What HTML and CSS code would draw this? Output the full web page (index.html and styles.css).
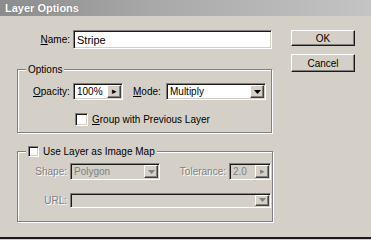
FILE: index.html
```html
<!DOCTYPE html>
<html>
<head>
<meta charset="utf-8">
<link rel="stylesheet" href="styles.css">
</head>
<body>
<div class="dialog">
  <div class="titlebar">Layer Options</div>
  <div class="main">
    <div class="left">
      <div class="name-row">
        <label class="name-label"><u>N</u>ame:</label>
        <div class="field name-field">Stripe</div>
      </div>
      <div class="group options">
        <span class="legend">Options</span>
        <div class="opt-row">
          <label class="lbl"><u>O</u>pacity:</label>
          <div class="field opacity"><span class="val">100%</span><span class="spin">&#9656;</span></div>
          <label class="lbl mode-lbl"><u>M</u>ode:</label>
          <div class="field select mode"><span class="val">Multiply</span><span class="drop"><svg width="7" height="4" viewBox="0 0 7 4"><path d="M0 0h7L3.5 4z" fill="#000"/></svg></span></div>
        </div>
        <div class="chk-row">
          <span class="check"></span>
          <span class="chk-text"><u>G</u>roup with Previous Layer</span>
        </div>
      </div>
      <div class="group imagemap">
        <span class="legend"><span class="check small"></span><span>Use Layer as Image Map</span></span>
        <div class="map-grid">
          <label class="dlbl">Shape:</label>
          <div class="field select shape disabled"><span class="val">Polygon</span><span class="drop"><svg width="7" height="4" viewBox="0 0 7 4"><path d="M0 0h7L3.5 4z" fill="#808080"/></svg></span></div>
          <label class="dlbl tol-lbl">Tolerance:</label>
          <div class="field tol disabled"><span class="val">2.0</span><span class="spin">&#9656;</span></div>
          <label class="dlbl">URL:</label>
          <div class="field select url disabled"><span class="val"></span><span class="drop"><svg width="7" height="4" viewBox="0 0 7 4"><path d="M0 0h7L3.5 4z" fill="#808080"/></svg></span></div>
        </div>
      </div>
    </div>
    <div class="buttons">
      <button class="btn default">OK</button>
      <button class="btn">Cancel</button>
    </div>
  </div>
</div>
</body>
</html>
```

FILE: styles.css
```css
html, body {
  margin: 0;
  padding: 0;
  background: #d4d0c8;
}
body {
  font-family: "Liberation Sans", Arial, sans-serif;
  font-size: 10px;
  color: #000;
  width: 371px;
  height: 240px;
  overflow: hidden;
}
u { text-decoration: underline; }
.dialog {
  width: 371px;
  height: 237px;
  background: #d4d0c8;
  border-bottom: 2px solid #1a1a1a;
  display: flex;
  flex-direction: column;
}
.titlebar {
  height: 16px;
  line-height: 16px;
  padding-left: 5px;
  font-weight: bold;
  font-size: 11px;
  color: #fff;
  background: linear-gradient(to right, #8c8c8c 0%, #a8a8a8 40%, #c4c4c4 100%);
  text-shadow: 0 0 1px #666;
}
.main {
  display: flex;
  padding-top: 14px;
}
.left {
  margin-left: 17px;
  width: 255px;
  display: flex;
  flex-direction: column;
}
.name-row {
  display: flex;
  align-items: center;
  height: 19px;
}
.name-label {
  width: 53px;
  text-align: right;
  margin-right: 3px;
}
.field {
  box-sizing: border-box;
  background: #fff;
  border: 1px solid;
  border-color: #808080 #fff #fff #808080;
  box-shadow: inset 1px 1px 0 #1a1a1a, inset -1px -1px 0 #d4d0c8;
  display: flex;
  align-items: center;
  padding-left: 3px;
}
.name-field {
  width: 199px;
  height: 19px;
  font-size: 11px;
}
.group {
  border: 1px solid #808080;
  box-shadow: 1px 1px 0 #fff, inset 1px 1px 0 #fff;
  display: flex;
  flex-direction: column;
}
.options {
  margin-top: 20px;
  width: 253px;
  height: 62px;
}
.legend {
  align-self: flex-start;
  margin-top: -7px;
  margin-left: 8px;
  padding: 0 2px;
  height: 13px;
  line-height: 13px;
  background: #d4d0c8;
  display: flex;
  align-items: center;
}
.opt-row {
  display: flex;
  align-items: center;
  margin-top: 7px;
  height: 17px;
}
.lbl {
  margin-left: 15px;
  width: 37px;
}
.opt-row .field { height: 17px; margin-left: 3px; }
.opacity { width: 50px; }
.val { flex: 1; white-space: nowrap; }
.spin, .drop {
  box-sizing: border-box;
  width: 14px;
  height: 13px;
  margin-right: 1px;
  background: #d4d0c8;
  border: 1px solid;
  border-color: #fff #404040 #404040 #fff;
  box-shadow: inset -1px -1px 0 #808080;
  display: flex;
  align-items: center;
  justify-content: center;
  font-size: 9px;
  line-height: 1;
}
.mode-lbl { margin-left: 10px; width: 30px; }
.mode { width: 100px; }
.chk-row {
  display: flex;
  align-items: center;
  margin-top: 12px;
  margin-left: 57px;
  height: 14px;
}
.check {
  box-sizing: border-box;
  width: 13px;
  height: 13px;
  background: #fff;
  border: 1px solid;
  border-color: #808080 #fff #fff #808080;
  box-shadow: inset 1px 1px 0 #1a1a1a, inset -1px -1px 0 #d4d0c8;
  margin-right: 4px;
}
.check.small { width: 11px; height: 11px; margin-right: 4px; }
.imagemap {
  margin-top: 18px;
  width: 254px;
  height: 69px;
}
.map-grid {
  display: grid;
  grid-template-columns: 49px 90px 63px 42px;
  grid-template-rows: 17px 14px;
  row-gap: 13px;
  column-gap: 3px;
  align-items: center;
  margin-top: 5px;
}
.dlbl {
  text-align: right;
  color: #808080;
  text-shadow: 1px 1px 0 #fff;
}
.disabled { background: #d4d0c8; color: #808080; }
.shape, .tol { height: 17px; }
.tol-lbl { padding-right: 0; }
.url { grid-column: 2 / span 3; height: 15px; }
.url .drop { height: 11px; }
.buttons {
  margin-left: 19px;
  display: flex;
  flex-direction: column;
  gap: 8px;
}
.btn {
  box-sizing: border-box;
  width: 64px;
  height: 16px;
  padding: 0;
  font-family: "Liberation Sans", Arial, sans-serif;
  font-size: 10px;
  color: #000;
  background: #d4d0c8;
  border: 1px solid;
  border-color: #fff #1a1a1a #1a1a1a #fff;
  box-shadow: inset -1px -1px 0 #808080;
}
.btn + .btn { height: 18px; }
```
